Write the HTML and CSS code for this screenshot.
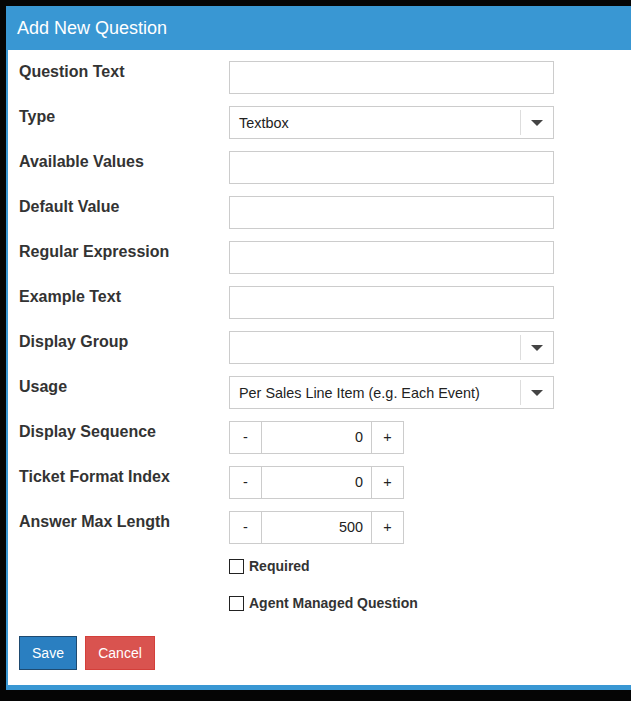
FILE: index.html
```html
<!DOCTYPE html>
<html>
<head>
    <title>Add New Question</title>
    <meta charset="utf-8" />
    <link rel="stylesheet" href="styles.css">
</head>
<body>
    <div class="dialog">
        <div class="dialog-header">Add New Question</div>

        <form class="dialog-body">
            <div class="row">
                <label class="row-label">Question Text</label>
                <input class="field" type="text">
            </div>
            <div class="row">
                <label class="row-label">Type</label>
                <div class="field select"><span>Textbox</span><i class="caret"></i></div>
            </div>
            <div class="row">
                <label class="row-label">Available Values</label>
                <input class="field" type="text">
            </div>
            <div class="row">
                <label class="row-label">Default Value</label>
                <input class="field" type="text">
            </div>
            <div class="row">
                <label class="row-label">Regular Expression</label>
                <input class="field" type="text">
            </div>
            <div class="row">
                <label class="row-label">Example Text</label>
                <input class="field" type="text">
            </div>
            <div class="row">
                <label class="row-label">Display Group</label>
                <div class="field select"><span></span><i class="caret"></i></div>
            </div>
            <div class="row">
                <label class="row-label">Usage</label>
                <div class="field select"><span>Per Sales Line Item (e.g. Each Event)</span><i class="caret"></i></div>
            </div>
            <div class="row">
                <label class="row-label">Display Sequence</label>
                <div class="spinner"><span class="spin-btn">-</span><span class="spin-value">0</span><span class="spin-btn">+</span></div>
            </div>
            <div class="row">
                <label class="row-label">Ticket Format Index</label>
                <div class="spinner"><span class="spin-btn">-</span><span class="spin-value">0</span><span class="spin-btn">+</span></div>
            </div>
            <div class="row">
                <label class="row-label">Answer Max Length</label>
                <div class="spinner"><span class="spin-btn">-</span><span class="spin-value">500</span><span class="spin-btn">+</span></div>
            </div>

            <!-- checkboxes -->
            <label class="check"><input type="checkbox"> Required</label>
            <label class="check"><input type="checkbox"> Agent Managed Question</label>

            <div class="actions">
                <button type="button" class="btn btn-save">Save</button>
                <button type="button" class="btn btn-cancel">Cancel</button>
            </div>
        </form>
    </div>
</body>
</html>
```

FILE: styles.css
```css
html, body {
    margin:0;
    padding:0;
    background-color:#050505;
    font-family:"Liberation Sans", Arial, sans-serif;
    color:#333;
    overflow:hidden;
}

/*** dialog frame ***/
.dialog {
    margin:6px 0 0 6px;
    width:640px;
    background:#fff;
    border-left:2px solid #3997d3;
    border-bottom:5px solid #3997d3;
    box-shadow:0 2px 0 #2a7db5;
}

.dialog-header {
    height:44px;
    margin-left:-2px;
    padding-left:11px;
    background:#3997d3;
    color:#fff;
    font-size:18px;
    line-height:44px;
}

.dialog-body {
    padding:11px 0 15px 11px;
}

/*** label + control rows ***/
.row {
    display:flex;
    align-items:flex-start;
    margin-bottom:12px;
}

.row-label {
    width:210px;
    font-size:16px;
    font-weight:bold;
    line-height:21px;
}

.field {
    box-sizing:border-box;
    width:325px;
    height:33px;
    margin:0;
    border:1px solid #ccc;
    background:#fff;
    font-family:inherit;
    font-size:14.4px;
}

.select {
    display:flex;
    align-items:center;
    color:#222;
}
.select span {
    flex:1;
    padding-left:9px;
}
.caret {
    width:32px;
    height:25px;
    border-left:1px solid #ddd;
    position:relative;
}
.caret:after {
    content:"";
    position:absolute;
    left:10px;
    top:10px;
    border-left:6px solid transparent;
    border-right:6px solid transparent;
    border-top:6px solid #444;
}

/*** numeric spinner ***/
.spinner {
    display:flex;
    box-sizing:border-box;
    width:175px;
    height:33px;
    border:1px solid #ccc;
    font-size:14.4px;
    color:#222;
}
.spin-btn {
    width:31px;
    text-align:center;
    line-height:31px;
}
.spin-value {
    flex:1;
    border-left:1px solid #ccc;
    border-right:1px solid #ccc;
    text-align:right;
    padding-right:8px;
    line-height:31px;
}

/*** checkboxes ***/
.check {
    display:flex;
    align-items:center;
    margin-left:210px;
    height:20px;
    font-size:14px;
    font-weight:bold;
    color:#333;
}
.check:first-of-type { margin-top:1px; }
.check + .check { margin-top:17px; }
.check input {
    -webkit-appearance:none;
    appearance:none;
    width:15px;
    height:15px;
    margin:0 5px 0 0;
    border:1px solid #222;
    background:#fff;
}

/*** buttons ***/
.actions {
    display:flex;
    gap:8px;
    margin-top:23px;
}
.btn {
    height:34px;
    padding:0 12px;
    font-family:inherit;
    font-size:14px;
    color:#fff;
    border:1px solid;
}
.btn-save {
    width:58px;
    background:#2a7fc1;
    border-color:#1e4a70;
}
.btn-cancel {
    width:70px;
    background:#d9534f;
    border-color:#d43f3a;
}
```
